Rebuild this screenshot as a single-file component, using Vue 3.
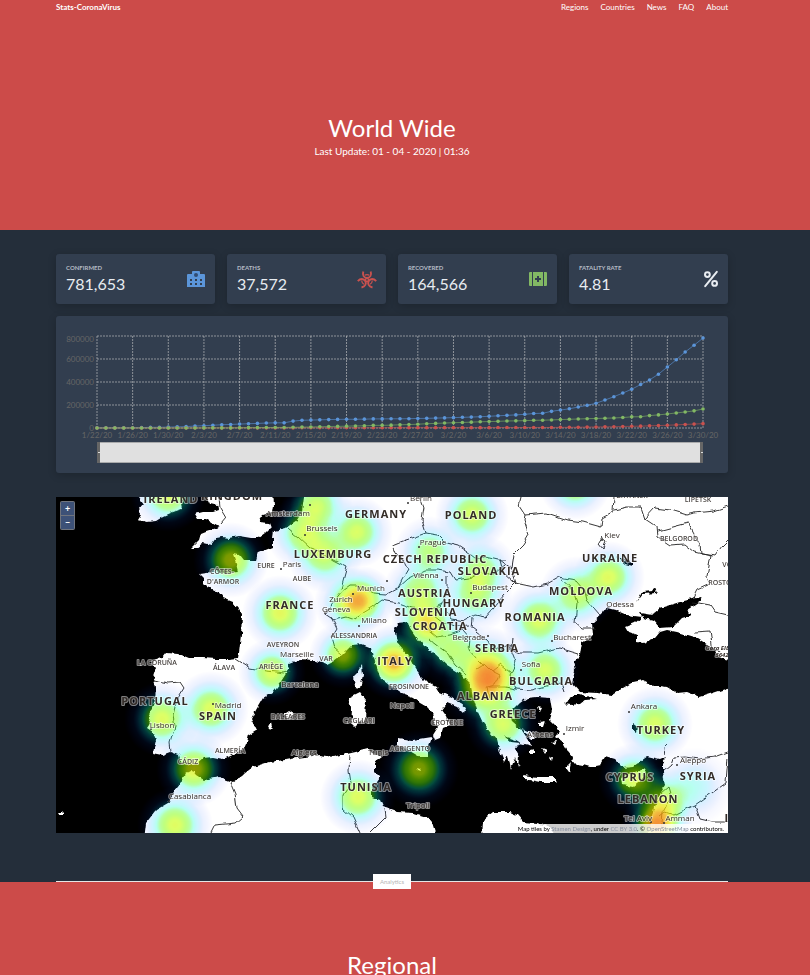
<script setup>
const navLinks = ['Regions', 'Countries', 'News', 'FAQ', 'About']

const stats = [
  { label: 'Confirmed', value: '781,653', icon: 'hospital' },
  { label: 'Deaths', value: '37,572', icon: 'biohazard' },
  { label: 'Recovered', value: '164,566', icon: 'kit' },
  { label: 'Fatality rate', value: '4.81', icon: 'percent' },
]

// Cumulative counts in thousands, one entry per day from 1/22/20
const confirmed = [1, 1, 1, 1, 2, 3, 6, 6, 8, 10, 12, 17, 20, 24, 28, 31, 34, 37, 40, 43, 45, 45, 60, 67, 69, 71, 73, 75, 76, 76, 77, 79, 79, 80, 80, 81, 83, 84, 86, 88, 90, 93, 95, 98, 102, 106, 110, 114, 119, 126, 128, 145, 156, 167, 182, 197, 215, 243, 272, 304, 337, 378, 418, 468, 530, 593, 661, 720, 782]
const recovered = [0, 0, 0, 0, 0, 0, 0, 0, 0, 0, 0, 0, 1, 1, 1, 1, 2, 3, 3, 4, 5, 5, 6, 8, 9, 11, 13, 14, 16, 18, 19, 23, 23, 25, 28, 30, 33, 37, 40, 43, 46, 48, 51, 54, 56, 58, 61, 62, 64, 67, 68, 70, 73, 76, 78, 81, 83, 85, 87, 91, 97, 98, 108, 114, 122, 131, 139, 149, 165]
const deaths = [0, 0, 0, 0, 0, 0, 0, 0, 0, 0, 0, 0, 0, 0, 1, 1, 1, 1, 1, 1, 1, 1, 1, 2, 2, 2, 2, 2, 2, 2, 2, 2, 2, 3, 3, 3, 3, 3, 3, 3, 3, 3, 3, 3, 3, 4, 4, 4, 4, 5, 5, 5, 6, 6, 7, 8, 9, 10, 11, 13, 15, 16, 19, 21, 24, 27, 31, 34, 38]

const left = 41
const right = 647
const top = 20
const bottom = 112
const px = (i) => left + (i * (right - left)) / (confirmed.length - 1)
const py = (v) => bottom - (v * (bottom - top)) / 800
const series = [
  { name: 'confirmed', data: confirmed },
  { name: 'deaths', data: deaths },
  { name: 'recovered', data: recovered },
].map((s) => {
  const points = s.data.map((v, i) => ({ x: px(i), y: py(v) }))
  return { name: s.name, points, line: points.map((p) => `${p.x},${p.y}`).join(' ') }
})
const dates = ['1/22/20', '1/26/20', '1/30/20', '2/3/20', '2/7/20', '2/11/20', '2/15/20', '2/19/20', '2/23/20', '2/27/20', '3/2/20', '3/6/20', '3/10/20', '3/14/20', '3/18/20', '3/22/20', '3/26/20', '3/30/20']
const levels = [0, 200, 400, 600, 800]

const land = [
  '138,497 143,504 138,510 142,515 139,520 147,522 156,521 164,516 173,512 182,509 181,503 184,490 138,490',
  '203,490 209,503 218,505 219,510 213,512 203,512 195,514 198,519 206,519 214,524 221,526 223,523 216,528 206,531 201,533 199,540 191,548 196,548 203,543 211,545 216,538 223,537 229,538 239,536 251,538 259,538 266,533 271,528 269,523 258,522 263,515 273,512 274,505 273,490',
  '305,490 302,512 297,520 286,528 274,531 273,538 273,547 258,553 256,560 243,560 239,555 233,554 236,563 238,572 226,573 216,571 206,573 199,574 203,578 203,582 208,587 219,592 223,598 233,602 238,608 242,615 241,635 239,652 238,658 229,659 216,659 203,658 189,658 179,654 166,653 162,658 151,662 156,668 153,677 156,687 155,700 151,710 148,717 151,722 147,728 153,732 156,740 153,753 163,755 171,752 179,755 181,762 189,766 196,764 203,758 213,757 223,759 233,755 243,750 246,743 248,735 256,730 251,720 256,710 263,698 273,692 280,683 287,672 290,663 300,659 313,660 327,665 333,662 342,655 352,645 362,644 372,648 375,662 380,677 390,685 402,693 413,697 420,703 427,707 433,713 435,722 438,727 433,735 435,740 440,738 443,728 450,725 447,717 442,710 447,703 457,707 463,713 465,707 453,698 440,692 437,687 427,682 418,673 413,665 408,655 397,642 394,628 398,623 408,622 410,628 417,638 423,645 433,652 447,665 460,673 470,683 473,697 477,710 483,723 490,732 497,740 500,752 504,762 508,755 511,770 515,758 518,768 519,757 515,750 520,743 532,746 523,733 515,720 513,710 520,703 527,698 537,697 550,698 552,710 550,720 560,730 555,737 563,743 567,750 573,757 572,763 583,765 590,767 600,765 605,757 615,760 623,768 633,767 647,757 660,760 667,757 663,763 663,773 665,785 660,793 655,807 652,820 647,840 740,840 740,490',
  '144,840 146,823 156,810 168,803 173,793 181,783 186,773 192,770 196,775 204,780 219,777 233,782 243,775 253,767 269,762 286,760 297,758 320,755 333,757 347,753 360,750 368,748 372,753 383,757 375,763 375,772 380,777 372,788 372,797 380,800 383,807 397,812 413,813 427,817 432,823 437,840',
  '482,840 483,820 493,812 510,812 517,815 523,822 537,823 550,827 560,840',
  '362,665 363,675 360,688 355,687 353,677 358,672',
  '360,692 366,700 365,720 360,722 355,727 351,723 352,710 348,698',
  '397,738 413,740 432,737 428,747 428,757 420,757 408,750 397,745',
  '523,775 537,777 553,777 558,782 540,782 525,779',
  '622,777 633,773 647,768 642,780 633,787 623,785',
  '268,726 272,723 273,727 270,730',
  '283,715 289,711 294,714 289,719',
  '58,812 62,812 65,815 60,815',
  '417,768 420,769 421,771 418,770',
  '521,729 529,732 536,739 532,739',
  '539,722 545,721 543,727 539,727',
  '530,750 534,749 534,753 530,753',
  '542,748 547,750 545,753',
  '551,742 557,741 555,745',
  '566,768 571,763 569,772',
  '537,707 541,708 539,712',
  '549,757 553,756 552,761',
]

const water = [
  '573,662 580,655 582,642 593,635 592,623 603,613 607,608 615,610 627,615 642,617 635,623 625,627 628,632 637,635 637,642 643,643 655,638 660,632 667,630 677,632 687,635 697,638 713,648 720,658 740,662 740,686 728,688 713,693 700,697 687,692 677,693 667,687 653,685 643,680 633,682 623,688 612,695 597,693 580,692 572,683 575,670',
  '640,613 652,615 660,608 680,602 700,597 702,600 687,610 692,615 682,618 673,627 660,628 653,620 643,618',
  '637,602 642,592 653,591 655,588 657,593 643,594',
  '616,556 625,561 633,563 633,566 625,564',
  '563,704 573,697 579,694 597,699 585,700 580,704 570,705',
  '633,724 637,727 636,732 633,730',
  '510,716 518,723 521,731 511,722',
  '504,736 516,740 521,743 511,742',
]

const borders = [
  '219,497 220,508 226,518 221,524',
  '420,497 424,508 422,520 426,533 412,538 403,541 393,545 396,553 404,562 408,570 402,580 398,588',
  '426,533 438,535 446,543 458,546 467,552 475,558 485,557 498,560 507,560',
  '398,588 408,579 425,570 437,570 450,572 455,580 470,578 480,572 492,575 505,565',
  '398,588 387,594 373,593 363,586 350,586 342,592 331,606 325,614',
  '325,614 334,620 346,617 354,620 363,613 373,607 382,600 398,603 412,608 430,610 442,604 447,592 447,575',
  '341,589 347,567 333,560 320,551 310,548 298,537 288,529',
  '331,617 337,629 332,637 335,648 342,654',
  '523,490 519,506 525,515 524,520 529,535 523,545 513,555 511,568 516,583',
  '525,515 547,513 568,520 583,522 601,527 602,518 613,512 614,497',
  '614,510 627,507 641,507 645,519 657,527 658,537 670,545 684,544 694,552 711,556 707,576 710,584 697,590 693,598',
  '645,519 655,508 670,510 686,515 694,513 714,511 728,506',
  '658,531 673,527 688,523 700,545 701,554 715,556 722,546 728,540',
  '511,568 500,560 503,572 515,583 534,587 547,584 559,577 577,580 584,588 587,600 600,615',
  '559,577 573,590 577,603 575,622 582,628 595,628',
  '516,583 505,594 493,608 485,617 475,615 464,621 452,619 447,611',
  '473,618 472,628 485,638 496,650 509,645 513,648',
  '442,604 435,615 444,622 455,626 470,625',
  '426,628 437,637 450,635 463,630 470,638 469,650 477,659 484,666',
  '430,640 447,653 455,665 466,675',
  '513,638 512,650 520,653 538,653 559,648 579,654',
  '509,645 516,662 510,675 515,689 532,690 550,685 561,683 564,692',
  '477,669 485,664 492,671 500,675 495,685 487,687 489,700',
  '492,671 501,664 511,672',
  '489,687 505,687 515,689',
  '153,680 168,683 180,682 184,688 177,699 173,715 175,726 170,743 171,752',
  '236,659 250,668 267,671 284,673 292,671',
  '230,782 235,794 237,809 243,817 236,823 215,825 211,833',
  '350,755 349,770 351,783 343,795 343,808 353,817 360,833',
  '385,808 386,817 376,827 370,833',
  '665,770 672,764 674,758 685,757 698,759 714,757 728,752',
  '728,758 726,783 695,805 674,815 665,812 660,816',
  '695,805 700,819 713,822 728,822',
  '661,793 668,787 671,797 663,812 661,833',
  '665,755 664,748 667,745',
  '601,537 606,541 603,548 599,543 602,538',
  '693,602 710,605 715,612 728,615',
  '695,632 710,631 712,645 718,653',
]

// x, y, radius, intensity
const heat = [
  [168, 494, 38, 0.62], [231, 560, 38, 0.64], [357, 532, 36, 0.6], [317, 506, 36, 0.56], [304, 533, 38, 0.56],
  [325, 555, 38, 0.56], [472, 515, 37, 0.6], [280, 613, 38, 0.64], [350, 603, 36, 0.56], [362, 600, 34, 0.66],
  [575, 484, 36, 0.6], [609, 577, 36, 0.62], [577, 594, 38, 0.56], [539, 620, 38, 0.62], [430, 552, 36, 0.5],
  [481, 570, 36, 0.5], [420, 593, 38, 0.56], [475, 595, 38, 0.5], [427, 624, 36, 0.72], [394, 662, 38, 0.8],
  [343, 655, 34, 0.62], [272, 672, 34, 0.62], [452, 650, 38, 0.5], [486, 668, 42, 0.66], [493, 682, 40, 0.64],
  [478, 692, 38, 0.44], [503, 724, 38, 0.6], [545, 670, 36, 0.6], [211, 709, 38, 0.62], [162, 719, 38, 0.62],
  [194, 769, 38, 0.66], [175, 825, 38, 0.62], [358, 797, 38, 0.62], [419, 769, 40, 0.62], [655, 724, 38, 0.6],
  [634, 779, 36, 0.62], [664, 802, 36, 0.56], [657, 825, 36, 0.84], [693, 787, 40, 0.28],
]

const countries = [
  [171, 503, 'IRELAND'], [232, 500, 'KINGDOM'], [376, 518, 'GERMANY'], [471, 519, 'POLAND'], [333, 558, 'LUXEMBURG'],
  [435, 563, 'CZECH REPUBLIC'], [489, 575, 'SLOVAKIA'], [425, 597, 'AUSTRIA'], [474, 607, 'HUNGARY'], [426, 616, 'SLOVENIA'],
  [440, 630, 'CROATIA'], [290, 609, 'FRANCE'], [395, 665, 'ITALY'], [497, 652, 'SERBIA'], [485, 700, 'ALBANIA'],
  [513, 718, 'GREECE'], [541, 685, 'BULGARIA'], [535, 621, 'ROMANIA'], [581, 595, 'MOLDOVA'], [610, 562, 'UKRAINE'],
  [155, 705, 'PORTUGAL'], [218, 720, 'SPAIN'], [366, 791, 'TUNISIA'], [661, 734, 'TURKEY'], [630, 781, 'CYPRUS'],
  [698, 780, 'SYRIA'], [648, 803, 'LEBANON'], [740, 822, 'IRAQ'],
]
const cities = [
  [288, 516, 'Amsterdam'], [322, 531, 'Brussels'], [292, 567, 'Paris'], [371, 591, 'Munich'], [341, 602, 'Zurich'],
  [336, 612, 'Geneva'], [374, 623, 'Milano'], [421, 501, 'Berlin'], [433, 545, 'Prague'], [426, 578, 'Vienna'],
  [490, 590, 'Budapest'], [469, 640, 'Belgrade'], [612, 538, 'Kiev'], [620, 607, 'Odessa'], [572, 640, 'Bucharest'],
  [531, 667, 'Sofia'], [297, 657, 'Marseille'], [300, 687, 'Barcelona'], [228, 708, 'Madrid'], [162, 728, 'Lisbon'],
  [190, 799, 'Casablanca'], [304, 755, 'Algiers'], [378, 755, 'Tunis'], [402, 708, 'Napoli'], [418, 808, 'Tripoli'],
  [540, 737, 'Athens'], [575, 731, 'Izmir'], [644, 709, 'Ankara'], [693, 763, 'Aleppo'], [638, 821, 'Tel Aviv'], [680, 821, 'Amman'],
]
const provinces = [
  [222, 574, 'CÔTES-'], [223, 584, "D'ARMOR"], [266, 568, 'EURE'], [302, 581, 'AUBE'], [283, 647, 'AVEYRON'],
  [326, 661, 'VAR'], [354, 638, 'ALESSANDRIA'], [271, 669, 'ARIÈGE'], [157, 665, 'LA CORUÑA'], [224, 670, 'ÁLAVA'],
  [288, 719, 'BALEARES'], [230, 753, 'ALMERÍA'], [188, 764, 'CÁDIZ'], [359, 723, 'CAGLIARI'], [409, 689, 'FROSINONE'],
  [447, 725, 'CROTENE'], [410, 751, 'AGRIGENTO'], [698, 502, 'LIPETSK'], [632, 498, 'BRYANSK'], [679, 541, 'BELGOROD'],
  [722, 585, 'ROSTOV'], [734, 567, 'VOLGA'],
]
const dots = [[305, 535], [310, 505], [281, 569], [387, 581], [353, 594], [325, 613], [359, 626], [408, 503], [419, 547], [442, 580], [471, 593], [488, 636], [602, 540], [552, 641], [521, 670], [213, 704], [151, 729], [169, 801], [564, 734], [629, 712], [677, 765], [651, 822], [664, 823]]
</script>

<template>
  <div class="page">
    <header class="hero">
      <nav class="nav container">
        <a class="brand" href="#">Stats-CoronaVirus</a>
        <div class="links">
          <a v-for="link in navLinks" :key="link" href="#">{{ link }}</a>
        </div>
      </nav>
      <div class="heading container">
        <h1>World Wide</h1>
        <p>Last Update: 01 - 04 - 2020 | 01:36</p>
      </div>
    </header>

    <main class="board container">
      <section class="stats">
        <article v-for="s in stats" :key="s.label" class="card stat">
          <div>
            <h2>{{ s.label }}</h2>
            <p>{{ s.value }}</p>
          </div>
          <svg v-if="s.icon === 'hospital'" class="icon" viewBox="0 0 18 16">
            <path fill="#5b95d9" fill-rule="evenodd" d="M5 1q0-1 1-1h6q1 0 1 1v2h4q1 0 1 1v12H0V4q0-1 1-1h4zM3 8v2h2V8zm5 0v2h2V8zm5 0v2h2V8zM3 12v2h2v-2zm5 0v2h2v-2zm5 0v2h2v-2z" />
            <circle cx="9" cy="4" r="2" fill="#314c72" />
          </svg>
          <svg v-else-if="s.icon === 'biohazard'" class="icon" viewBox="0 0 18 16">
            <g fill="none" stroke="#c9524f">
              <g v-for="a in [0, 120, 240]" :key="a" :transform="`rotate(${a} 9 9)`">
                <path d="M5.300.500C4.200 4.200 6 7 9 7s4.800-2.800 3.700-6.500" stroke-width="1.900" />
                <path d="M9 6.500v1.800" stroke-width="1.800" />
                <path d="M6.800 4.100Q9 3 11.200 4.100" stroke-width="1.200" />
              </g>
              <circle cx="9" cy="9" r="1.700" stroke-width="1.200" />
            </g>
          </svg>
          <svg v-else-if="s.icon === 'kit'" class="icon" viewBox="0 0 18 16">
            <path fill="#82b864" fill-rule="evenodd" d="M1 1h2v14H1q-1 0-1-1V2q0-1 1-1zm3 0h10v14H4zm11 0h2q1 0 1 1v12q0 1-1 1h-2zM8 5v2H6v2h2v2h2V9h2V7h-2V5z" />
          </svg>
          <svg v-else class="icon narrow" viewBox="0 0 14 16">
            <g fill="none" stroke="#e8ecf1" stroke-width="2">
              <circle cx="3.4" cy="3.6" r="2.4" />
              <circle cx="10.6" cy="12.4" r="2.4" />
              <path d="M12.8.8 1.2 15.2" stroke-linecap="round" />
            </g>
          </svg>
        </article>
      </section>

      <section class="card chart">
        <svg viewBox="0 0 672 157" role="img" aria-label="Cases by day">
          <g class="grid">
            <line v-for="l in levels" :key="l" :x1="left" :x2="right" :y1="py(l)" :y2="py(l)" />
            <line v-for="(d, i) in dates" :key="d" :x1="px(i * 4)" :x2="px(i * 4)" :y1="top" :y2="bottom" />
          </g>
          <g class="axis">
            <text v-for="l in levels" :key="l" :x="left - 3" :y="l === 800 ? 26 : py(l) + 3" text-anchor="end">{{ l * 1000 }}</text>
            <text v-for="(d, i) in dates" :key="d" :x="px(i * 4)" y="122" text-anchor="middle">{{ d }}</text>
          </g>
          <g v-for="s in series" :key="s.name" :class="s.name">
            <polyline :points="s.line" />
            <circle v-for="(p, i) in s.points" :key="i" :cx="p.x" :cy="p.y" r="1.8" />
          </g>
          <rect x="41" y="126" width="606" height="21" fill="#a9aaab" />
          <rect x="41" y="127" width="606" height="19" fill="#e0e0e0" />
          <rect x="41" y="126" width="3" height="21" fill="#666" />
          <rect x="644" y="126" width="3" height="21" fill="#666" />
          <path d="M42 136.500h2M645 136.500h2" stroke="#ddd" />
        </svg>
      </section>

      <section class="map">
        <svg viewBox="56 497 672 336" role="img" aria-label="Heat map of cases">
          <defs>
            <filter id="coast" filterUnits="userSpaceOnUse" x="40" y="480" width="710" height="370">
              <feTurbulence type="fractalNoise" baseFrequency="0.16" numOctaves="2" seed="4" />
              <feDisplacementMap in="SourceGraphic" scale="5" xChannelSelector="R" yChannelSelector="G" />
            </filter>
            <filter id="wobble" filterUnits="userSpaceOnUse" x="40" y="480" width="710" height="370">
              <feTurbulence type="fractalNoise" baseFrequency="0.12" numOctaves="1" seed="7" />
              <feDisplacementMap in="SourceGraphic" scale="6" xChannelSelector="R" yChannelSelector="G" />
            </filter>
            <radialGradient id="spot">
              <stop offset="0" stop-opacity="1" />
              <stop offset="0.150" stop-opacity="0.950" />
              <stop offset="0.350" stop-opacity="0.740" />
              <stop offset="0.550" stop-opacity="0.380" />
              <stop offset="0.750" stop-opacity="0.130" />
              <stop offset="1" stop-opacity="0" />
            </radialGradient>
            <filter id="ramp" filterUnits="userSpaceOnUse" x="40" y="440" width="710" height="430" color-interpolation-filters="sRGB">
              <feColorMatrix values="0 0 0 1 0  0 0 0 1 0  0 0 0 1 0  0 0 0 0 1" />
              <feComponentTransfer>
                <feFuncR type="table" tableValues="0 0 0 0.05 0.3 0.5 0.78 0.92 0.94 0.96 1" />
                <feFuncG type="table" tableValues="0 0.4 0.8 1 1 1 1 0.88 0.6 0.4 0" />
                <feFuncB type="table" tableValues="1 1 1 0.8 0.15 0 0 0 0.05 0.1 0" />
              </feComponentTransfer>
              <feComposite operator="in" in2="SourceGraphic" />
            </filter>
          </defs>
          <rect x="56" y="497" width="672" height="336" />
          <g filter="url(#coast)">
            <polygon v-for="(p, i) in land" :key="i" :points="p" fill="#fff" />
            <polygon v-for="(p, i) in water" :key="i" :points="p" />
          </g>
          <g filter="url(#wobble)">
            <polyline v-for="(p, i) in borders" :key="i" :points="p" class="border" />
          </g>
          <g filter="url(#ramp)">
            <circle v-for="(h, i) in heat" :key="i" :cx="h[0]" :cy="h[1]" :r="h[2]" fill="url(#spot)" :opacity="h[3]" />
          </g>
          <circle v-for="(d, i) in dots" :key="i" :cx="d[0]" :cy="d[1]" r="1" fill="#333" />
          <g class="labels">
            <text v-for="c in countries" :key="c[2]" :x="c[0]" :y="c[1]" class="country">{{ c[2] }}</text>
            <text v-for="c in cities" :key="c[2]" :x="c[0]" :y="c[1]" class="city">{{ c[2] }}</text>
            <text v-for="c in provinces" :key="c[2]" :x="c[0]" :y="c[1]" class="province">{{ c[2] }}</text>
            <text x="722" y="650" class="peak">Gora Elbrus</text>
            <text x="722" y="657" class="peak">5642</text>
          </g>
        </svg>
        <div class="zoom">
          <button type="button" aria-label="Zoom in">+</button>
          <button type="button" aria-label="Zoom out">−</button>
        </div>
        <p class="credit">
          Map tiles by <a href="#">Stamen Design</a>, under <a href="#">CC BY 3.0</a>. © <a href="#">OpenStreetMap</a> contributors.
        </p>
      </section>

      <div class="divider"><span>Analytics</span></div>
    </main>

    <section class="regional container">
      <h1>Regional</h1>
    </section>
  </div>
</template>

<style>
body {
  margin: 0;
  background: #cc4b49;
  overflow: hidden;
}
</style>

<style scoped>
.page {
  font-family: Lato, sans-serif;
  color: #fff;
  background: #cc4b49;
  height: 100vh;
  overflow: hidden;
}
.container {
  padding-left: 56px;
  padding-right: 82px;
}
.hero {
  padding-bottom: 70px;
}
.nav {
  display: flex;
  justify-content: space-between;
  align-items: center;
  height: 14px;
  font-size: 8px;
}
.nav a {
  color: #fff;
  text-decoration: none;
}
.brand {
  font-weight: 700;
}
.links {
  display: flex;
  gap: 12px;
}
.heading {
  padding-top: 100px;
  text-align: center;
}
h1 {
  margin: 0;
  font-size: 24px;
  line-height: 28px;
  font-weight: 400;
}
.heading p {
  margin: 0;
  font-size: 10px;
  line-height: 18px;
}
.board {
  background: #242e3a;
  padding-top: 24px;
}
.card {
  background: #323e4f;
  border-radius: 3px;
  box-shadow: 0 2px 8px rgba(0, 0, 0, 0.2);
}
.stats {
  display: grid;
  grid-template-columns: repeat(4, 1fr);
  gap: 12px;
  margin-bottom: 12px;
}
.stat {
  display: flex;
  justify-content: space-between;
  align-items: center;
  height: 50px;
  padding: 0 10px;
  box-sizing: border-box;
}
.stat h2 {
  margin: 0;
  font-size: 6px;
  line-height: 8px;
  font-weight: 700;
  text-transform: uppercase;
  color: #b4bac4;
}
.stat p {
  margin: 2px 0 0;
  font-size: 16px;
  line-height: 20px;
  color: #e8ecf1;
}
.icon {
  width: 18px;
  height: 16px;
  overflow: visible;
}
.icon.narrow {
  width: 14px;
}
.chart {
  margin-bottom: 24px;
}
.chart svg,
.map svg {
  display: block;
  width: 100%;
}
.grid line {
  stroke: #ccc;
  stroke-opacity: 0.6;
  stroke-dasharray: 2 1;
  stroke-width: 1;
}
.axis text {
  font-size: 8px;
  fill: #666;
}
.chart polyline {
  fill: none;
  stroke-width: 1;
  opacity: 0.6;
}
.confirmed {
  fill: #5b95d9;
  stroke: #5b95d9;
}
.deaths {
  fill: #c9524f;
  stroke: #c9524f;
}
.recovered {
  fill: #82b864;
  stroke: #82b864;
}
.chart circle {
  stroke: none;
}
.map {
  position: relative;
  margin-bottom: 48px;
  overflow: hidden;
}
.border {
  fill: none;
  stroke: #222;
  stroke-width: 0.9;
}
.labels text {
  font-family: "Open Sans", sans-serif;
  text-anchor: middle;
  paint-order: stroke;
  stroke: rgba(255, 255, 255, 0.5);
  stroke-width: 2px;
  stroke-linejoin: round;
  fill: #332c28;
}
.labels .country {
  font-size: 11px;
  font-weight: 700;
  letter-spacing: 1px;
}
.labels .city {
  font-size: 8px;
}
.labels .province {
  font-size: 7px;
  font-weight: 600;
  fill: #4a4542;
}
.labels .peak {
  font-size: 6px;
  font-weight: 700;
  font-style: italic;
}
.zoom {
  position: absolute;
  top: 4px;
  left: 4px;
  display: flex;
  flex-direction: column;
  gap: 1px;
  padding: 1px;
  border-radius: 2px;
  background: #70747d;
}
.zoom button {
  width: 13px;
  height: 13px;
  padding: 0;
  border: 0;
  background: #3d5177;
  color: #fff;
  font: 700 9px/13px Lato, sans-serif;
}
.credit {
  position: absolute;
  right: 0;
  bottom: 0;
  margin: 0;
  padding: 0 4px;
  background: rgba(255, 255, 255, 0.8);
  color: #000;
  font-size: 6px;
  line-height: 9px;
}
.credit a {
  color: #878fa0;
  text-decoration: none;
}
.divider {
  position: relative;
  display: flex;
  justify-content: center;
  align-items: center;
  height: 1px;
  background: #e6e6e6;
}
.divider span {
  flex: none;
  padding: 0 7px;
  background: #fff;
  color: #b5b5b5;
  font-size: 6px;
  line-height: 15px;
}
.regional {
  padding-top: 69px;
  text-align: center;
}
</style>
